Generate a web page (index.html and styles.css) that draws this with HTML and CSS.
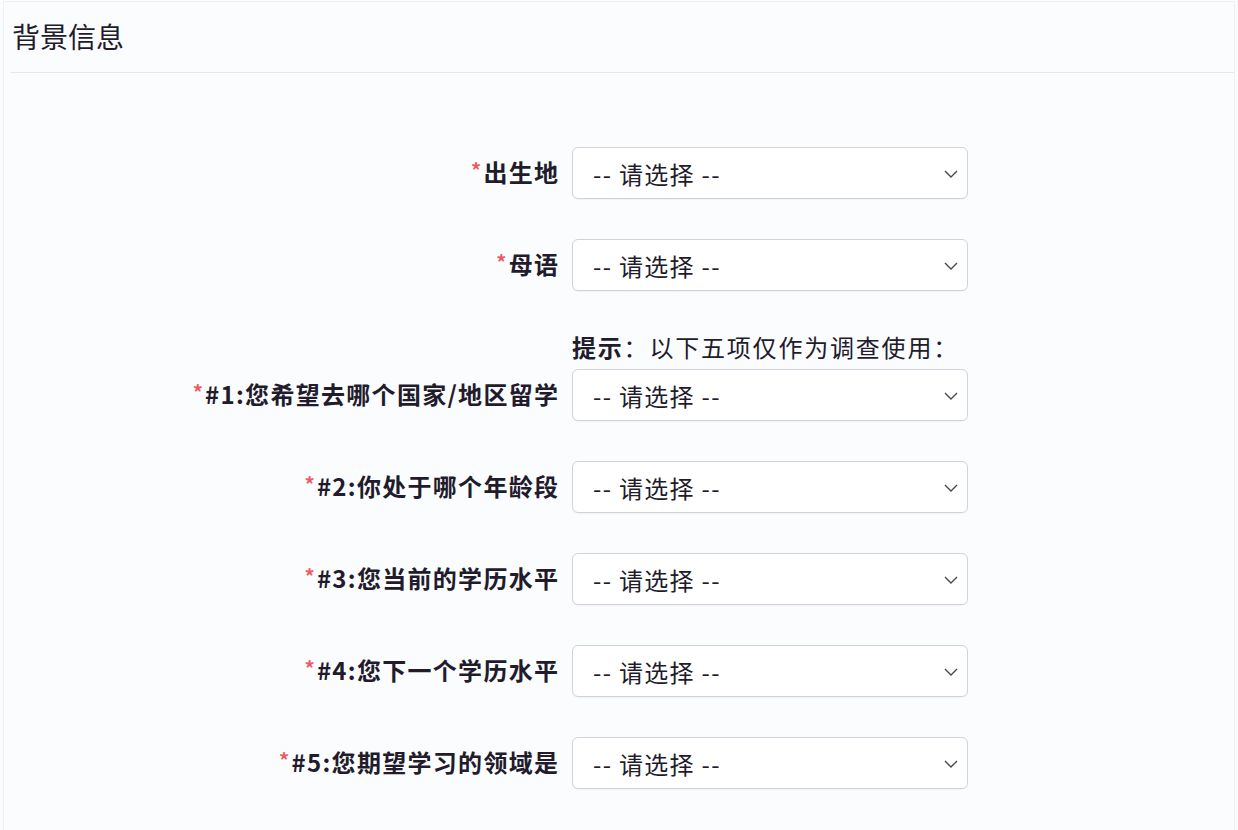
FILE: index.html
```html
<!DOCTYPE html>
<html lang="zh-CN">
<head>
  <meta charset="UTF-8">
  <title>背景信息</title>
  <link rel="stylesheet" href="styles.css">
</head>
<body>
  <div class="card">
    <div class="card-header">背景信息</div>

    <form class="form">
      <div class="row">
        <label class="label"><span class="req">*</span>出生地</label>
        <div class="select-wrap">
          <select><option>-- 请选择 --</option></select>
          <svg class="chevron" width="14" height="8" viewBox="0 0 14 8"><path d="M1 1l6 6 6-6" fill="none" stroke="#4a4650" stroke-width="1.4"/></svg>
        </div>
      </div>

      <div class="row">
        <label class="label"><span class="req">*</span>母语</label>
        <div class="select-wrap">
          <select><option>-- 请选择 --</option></select>
          <svg class="chevron" width="14" height="8" viewBox="0 0 14 8"><path d="M1 1l6 6 6-6" fill="none" stroke="#4a4650" stroke-width="1.4"/></svg>
        </div>
      </div>

      <div class="row">
        <div class="hint"><b>提示</b>：以下五项仅作为调查使用：</div>
        <label class="label"><span class="req">*</span>#1:您希望去哪个国家/地区留学</label>
        <div class="select-wrap">
          <select><option>-- 请选择 --</option></select>
          <svg class="chevron" width="14" height="8" viewBox="0 0 14 8"><path d="M1 1l6 6 6-6" fill="none" stroke="#4a4650" stroke-width="1.4"/></svg>
        </div>
      </div>

      <div class="row">
        <label class="label"><span class="req">*</span>#2:你处于哪个年龄段</label>
        <div class="select-wrap">
          <select><option>-- 请选择 --</option></select>
          <svg class="chevron" width="14" height="8" viewBox="0 0 14 8"><path d="M1 1l6 6 6-6" fill="none" stroke="#4a4650" stroke-width="1.4"/></svg>
        </div>
      </div>

      <div class="row">
        <label class="label"><span class="req">*</span>#3:您当前的学历水平</label>
        <div class="select-wrap">
          <select><option>-- 请选择 --</option></select>
          <svg class="chevron" width="14" height="8" viewBox="0 0 14 8"><path d="M1 1l6 6 6-6" fill="none" stroke="#4a4650" stroke-width="1.4"/></svg>
        </div>
      </div>

      <div class="row">
        <label class="label"><span class="req">*</span>#4:您下一个学历水平</label>
        <div class="select-wrap">
          <select><option>-- 请选择 --</option></select>
          <svg class="chevron" width="14" height="8" viewBox="0 0 14 8"><path d="M1 1l6 6 6-6" fill="none" stroke="#4a4650" stroke-width="1.4"/></svg>
        </div>
      </div>

      <div class="row">
        <label class="label"><span class="req">*</span>#5:您期望学习的领域是</label>
        <div class="select-wrap">
          <select><option>-- 请选择 --</option></select>
          <svg class="chevron" width="14" height="8" viewBox="0 0 14 8"><path d="M1 1l6 6 6-6" fill="none" stroke="#4a4650" stroke-width="1.4"/></svg>
        </div>
      </div>
    </form>
  </div>
</body>
</html>
```

FILE: styles.css
```css
* {
  box-sizing: border-box;
}

body {
  margin: 0;
  background: #fbfcfe;
  font-family: "Noto Sans CJK SC", "Noto Sans", sans-serif;
  color: #221b2c;
}

.card {
  margin: 1px 3px 0;
  min-height: 829px;
  border: 1px solid #eef0f4;
  border-bottom: none;
  background: #fbfcfe;
}

.card-header {
  height: 71px;
  margin-left: 6px;
  padding: 16px 0 0 2px;
  font-size: 28px;
  line-height: 36px;
  border-bottom: 1px solid #e5e8ed;
}

.form {
  display: flex;
  flex-direction: column;
  gap: 40px;
  padding-top: 74px;
}

.row {
  display: grid;
  grid-template-columns: 554px 396px;
  column-gap: 14px;
  align-items: center;
}

.hint {
  grid-column: 2;
  height: 38px;
  font-size: 24px;
  line-height: 32px;
  letter-spacing: 1.8px;
  white-space: nowrap;
}

.hint b {
  font-weight: 700;
}

.label {
  grid-column: 1;
  margin-right: -1.3px;
  text-align: right;
  font-size: 24px;
  font-weight: 700;
  line-height: 32px;
  letter-spacing: 1.3px;
  white-space: nowrap;
}

.req {
  position: relative;
  top: -4px;
  color: #ec5b62;
  font-size: 20px;
  margin-right: 1px;
}

.select-wrap {
  grid-column: 2;
  position: relative;
}

.select-wrap select {
  display: block;
  width: 100%;
  height: 52px;
  padding: 0 40px 0 20px;
  appearance: none;
  -webkit-appearance: none;
  background: #fff;
  border: 1px solid #d0d3d9;
  border-radius: 6px;
  box-shadow: 0 1px 1px rgba(0, 0, 0, 0.04);
  font-family: inherit;
  font-size: 24px;
  letter-spacing: 1.3px;
  color: #221b2c;
}

.chevron {
  position: absolute;
  right: 10px;
  top: 23px;
  pointer-events: none;
}
```
